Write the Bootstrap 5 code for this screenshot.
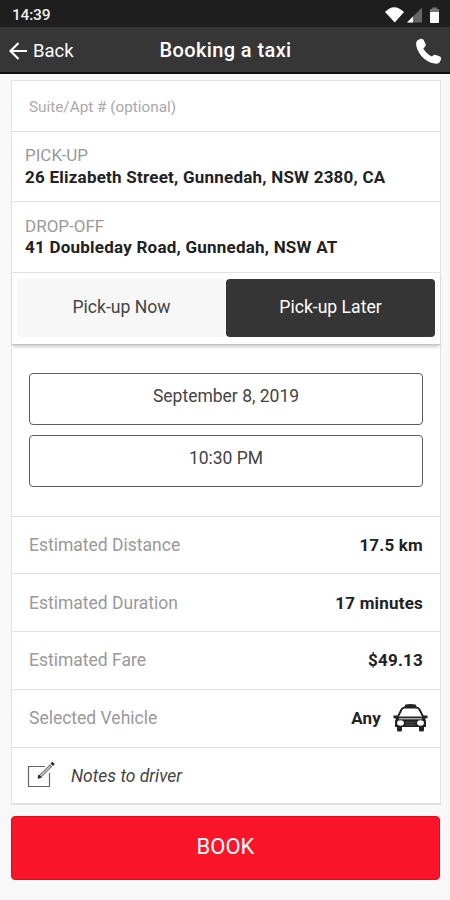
<!DOCTYPE html>
<html lang="en">
<head>
<meta charset="utf-8">
<meta name="viewport" content="width=device-width, initial-scale=1">
<title>Booking a taxi</title>
<link href="https://cdn.jsdelivr.net/npm/bootstrap@5.3.0/dist/css/bootstrap.min.css" rel="stylesheet">
<style>
body{font-family:Roboto,"Liberation Sans",sans-serif;background:#f8f8f8;color:#222;height:900px;overflow:hidden;font-size:18px;line-height:22px}
.status{height:27px;background:#1e1e1e;color:#eee;font-size:15.5px;font-weight:500;letter-spacing:-.2px;padding:2px 9px 0 12px}
.topbar{height:47px;background:#363636;border-bottom:2px solid #0c0c0c;color:#fff;display:grid;grid-template-columns:1fr auto 1fr;padding:0 8px 0 9px}
.topbar .back{font-size:18.5px;gap:6px;padding-top:2px}
.topbar h1{font-size:20px;font-weight:500;letter-spacing:.4px}
.sheet{margin:6px 9px 0 11px;border:1px solid #e2e2e2;border-width:1px 1px 2px 1px;border-radius:0;height:725px}
.line{border-bottom:1.5px solid #e2e2e2;flex:none}
.suite{height:51px;padding:2px 17px 0;color:#a9a9a9;font-size:15.3px}
.addr{height:70px;padding:0 12px 0 13px;line-height:21.5px}
.addr+.addr{height:71px}
.addr .cap{color:#999;font-size:17px}
.addr .val{font-size:17px;font-weight:700;letter-spacing:.23px}
.when{height:72px;padding:6px 5px 7px;border-bottom:1px solid #c4c4c4;box-shadow:0 3px 3px -1px rgba(0,0,0,.2);flex:none}
.when .btn{font-size:17.6px;border:0;border-radius:4px;flex:1;padding:0 0 2px}
.now{background:#f7f7f7;color:#444}
.later,.later:hover{background:#353535;color:#fff}
.times{height:171.5px;padding:27.5px 17px 0;gap:10px}
.times .btn{height:52px;border:1px solid #5c5c5c;border-radius:4px;font-size:17.5px;color:#444;padding:0 0 4px}
.est{height:57.8px;padding:0 17px;font-size:17.5px}
.est .cap{color:#999}
.est .val{font-weight:700;font-size:17px;letter-spacing:.2px}
.notes{padding:1px 15px 0;flex:1;font-style:italic;font-size:17.5px;color:#444}
.book,.book:hover{margin:11px 10px 0 11px;height:64px;background:#fb1528;border:1px solid #e30a1c;color:#fff;border-radius:4px;font-size:22px;padding:0 0 4px}
svg{display:block;flex:none}
</style>
</head>
<body>
<div class="status d-flex justify-content-between align-items-center">
  <span>14:39</span>
  <svg width="56" height="18" viewBox="0 0 56 18">
    <path d="M0 6Q9-3.500 19 6L9.800 16.500Z" fill="#fff"/>
    <path d="M22 16.500 37 1.500v15z" fill="#666"/><path d="M22 16.500 28 10.500v6z" fill="#fff"/>
    <path d="M45 3h2.200V1.500h4.600V3H54v4h-9z" fill="#777"/><path d="M45 6h9v10a1 1 0 0 1-1 1h-7a1 1 0 0 1-1-1z" fill="#fff"/>
  </svg>
</div>
<header class="topbar align-items-center">
  <div class="back d-flex align-items-center"><svg width="18" height="18" viewBox="0 0 18 18" fill="none" stroke="#fff" stroke-width="2.200"><path d="M18 9H2M9.500 1 1.500 9l8 8"/></svg>Back</div>
  <h1 class="m-0">Booking a taxi</h1>
  <svg class="ms-auto mt-1" width="27" height="27" viewBox="0 0 27 27"><path d="M2.200 2.500 5.500.800Q7.500.200 8.600 2L10.600 6Q11.200 7.800 9.800 9L8.300 10.500Q11.500 16 16.800 18.500L18.400 17.200Q19.500 16.500 21 17L25 18.600Q26.800 19.500 26 21.500L24.800 24Q23.500 26 21.500 25.800Q8 24.500 2.200 11Q0 5 2.200 2.500Z" fill="#fff"/></svg>
</header>
<main class="sheet card">
  <div class="suite line d-flex align-items-center">Suite/Apt # (optional)</div>
  <div class="addr line d-flex flex-column justify-content-center"><div class="cap">PICK-UP</div><div class="val">26 Elizabeth Street, Gunnedah, NSW 2380, CA</div></div>
  <div class="addr line d-flex flex-column justify-content-center"><div class="cap">DROP-OFF</div><div class="val">41 Doubleday Road, Gunnedah, NSW AT</div></div>
  <div class="when d-flex"><button class="btn now">Pick-up Now</button><button class="btn later">Pick-up Later</button></div>
  <div class="times line d-flex flex-column"><button class="btn">September 8, 2019</button><button class="btn">10:30 PM</button></div>
  <div class="est line d-flex justify-content-between align-items-center"><span class="cap">Estimated Distance</span><span class="val">17.5 km</span></div>
  <div class="est line d-flex justify-content-between align-items-center"><span class="cap">Estimated Duration</span><span class="val">17 minutes</span></div>
  <div class="est line d-flex justify-content-between align-items-center"><span class="cap">Estimated Fare</span><span class="val">$49.13</span></div>
  <div class="est line d-flex align-items-center pe-2"><span class="cap me-auto">Selected Vehicle</span><span class="val me-2 pe-1">Any</span>
    <svg class="me-1" width="35" height="30" viewBox="0 0 35 30">
      <path d="M11 4.500 12.500 1.500Q17.500.500 22.500 1.500L24 4.500Z" fill="#222"/>
      <path d="M5 13.500 8.500 6.500Q9.500 4.500 12 4.500H23Q25.500 4.500 26.500 6.500L30 13.500" fill="none" stroke="#222" stroke-width="1.900"/>
      <path d="M.5 12.500h4l1 1h24l1-1h4v2.500l-2.500.8 1 2V24H2v-6.200l1-2-2.500-.8z" fill="#222"/>
      <path d="M4 23h5v4q0 1.500-1.500 1.500h-2Q4 28.500 4 27zm22 0h5v4q0 1.500-1.500 1.500h-2Q26 28.500 26 27z" fill="#222"/>
      <path d="M6 15.700h23" stroke="#aaa" stroke-width="1.500"/>
      <ellipse cx="7.500" cy="20" rx="3.400" ry="2.700" fill="#fff"/><ellipse cx="27.500" cy="20" rx="3.400" ry="2.700" fill="#fff"/>
      <path d="M12.500 19.300h10M12.500 21.800h10" stroke="#555"/>
    </svg></div>
  <div class="notes d-flex align-items-center"><svg class="me-3" width="28" height="27" viewBox="0 0 28 27"><path d="M18 4.500H1.500v20h21V11" fill="none" stroke="#666" stroke-width="1.200"/><path d="M12.500 15 24 3.500" stroke="#777" stroke-width="3.200"/><path d="M13.500 14 23 4.500" stroke="#ccc" stroke-width="1.200"/><path d="m11 16.200.8-3 2.200 2.200zM24 1.500l1.500-1.200 1.700 1.700L26 3.500z" fill="#222" stroke="#222"/></svg>Notes to driver</div>
</main>
<div class="d-grid"><button class="btn book">BOOK</button></div>
<script src="https://cdn.jsdelivr.net/npm/bootstrap@5.3.0/dist/js/bootstrap.bundle.min.js"></script>
</body>
</html>
